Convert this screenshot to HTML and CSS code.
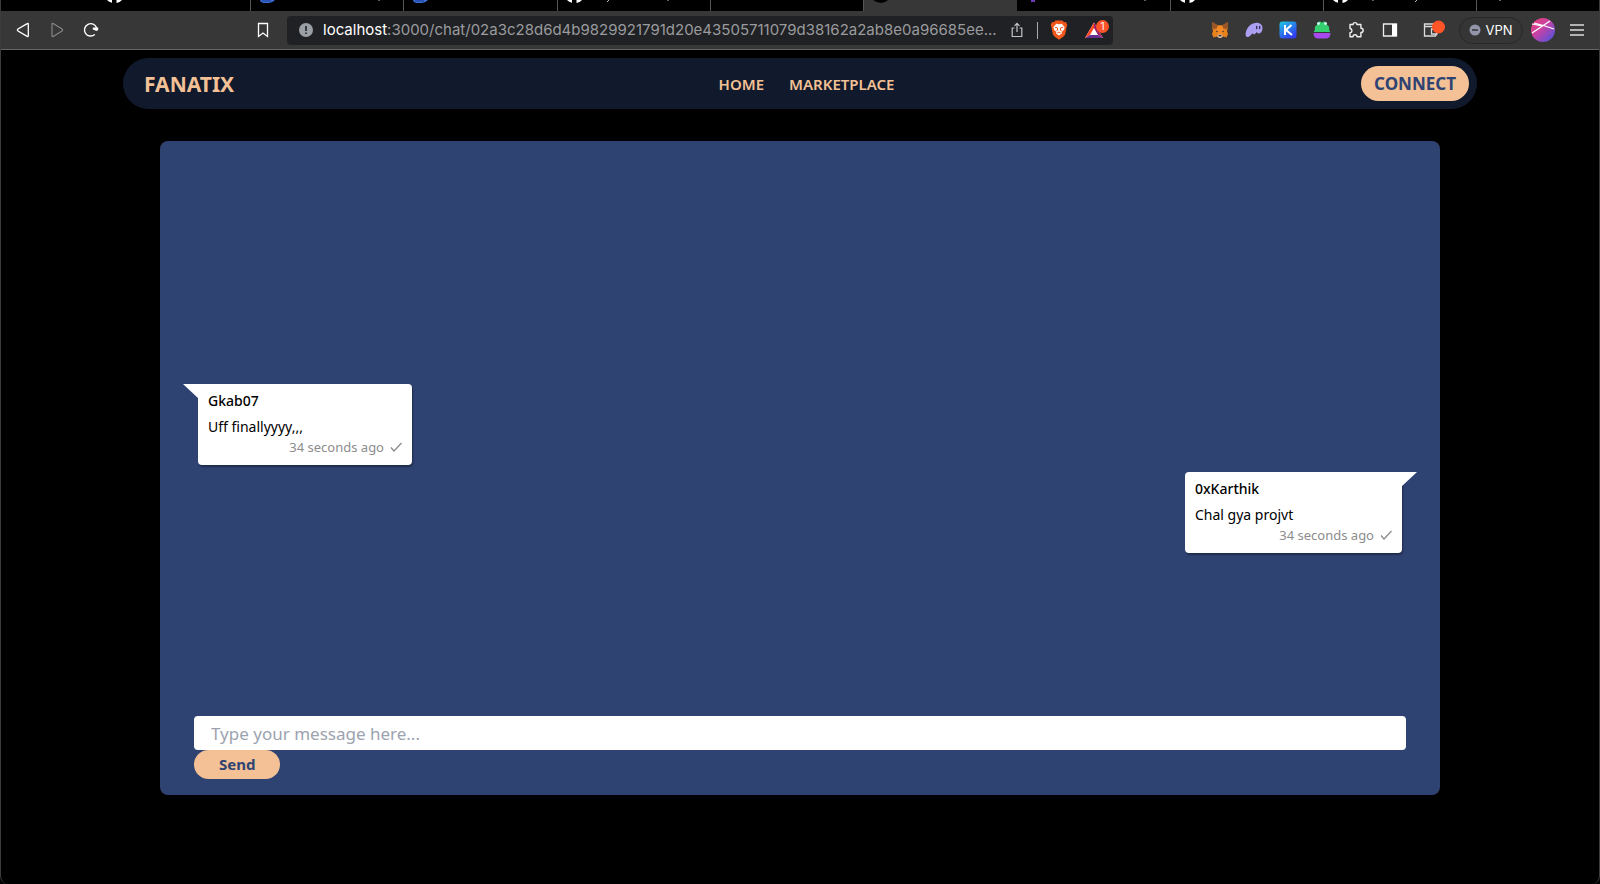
FILE: index.html
```html
<!DOCTYPE html>
<html lang="en">
<head>
<meta charset="utf-8">
<title>Fanatix chat</title>
<link rel="stylesheet" href="styles.css">
</head>
<body>
<div class="window">
  <div class="tabs">
    <div class="tab"><svg class="mark" viewBox="0 0 130 11"><path d="M0 0h5v2.800Q2 2 0 0zM9.500 0h5.500q-2 2.400-5.500 3z" fill="#fff"/></svg></div>
    <div class="tab"><svg class="mark" viewBox="0 0 130 11"><path d="M0 0h15q-3 3-6 3h-6q-3-1-3-3z" fill="#3e6fd8"/><path d="M2 1h9" stroke="#173a8a"/><path d="M119 0v1" stroke="#bbb"/></svg></div>
    <div class="tab"><svg class="mark" viewBox="0 0 130 11"><path d="M0 0h15q-3 3-6 3h-6q-3-1-3-3z" fill="#3e6fd8"/><path d="M2 1h9" stroke="#173a8a"/></svg></div>
    <div class="tab"><svg class="mark" viewBox="0 0 130 11"><path d="M0 0h5v2.800Q2 2 0 0zM9.500 0h5.500q-2 2.400-5.500 3z" fill="#fff"/><path d="M42 0l-2 2M101 0v1" stroke="#bbb"/></svg></div>
    <div class="tab"></div>
    <div class="tab active"><svg class="mark" viewBox="0 0 130 11"><path d="M0 0h15q-3 3-7 3t-8-3z" fill="#000"/></svg></div>
    <div class="tab"><svg class="mark" viewBox="0 0 130 11"><path d="M5 0h4v2h-4z" fill="#6a3bb5"/><path d="M119 0v1" stroke="#bbb"/></svg></div>
    <div class="tab"><svg class="mark" viewBox="0 0 130 11"><path d="M0 0h5v2.800Q2 2 0 0zM9.500 0h5.500q-2 2.400-5.500 3z" fill="#fff"/></svg></div>
    <div class="tab"><svg class="mark" viewBox="0 0 130 11"><path d="M0 0h5v2.800Q2 2 0 0zM9.500 0h5.500q-2 2.400-5.500 3z" fill="#fff"/><path d="M40 0v1M84 0l-2 2" stroke="#bbb"/></svg></div>
    <div class="tab last"><svg class="mark" viewBox="0 0 130 11"><path d="M14 0v1" stroke="#ccc"/></svg></div>
  </div>

  <div class="toolbar">
    <div class="controls">
      <button class="tool" aria-label="Back"><svg width="16" height="16" viewBox="0 0 16 16"><path d="M13.300 2.200v11.600q0 1.300-1.100.6L3 9q-1.200-1 0-2l9.200-5.400q1.100-.7 1.100.6z" fill="none" stroke="#fff" stroke-width="1.300"/></svg></button>
      <button class="tool" aria-label="Forward"><svg width="16" height="16" viewBox="0 0 16 16"><path d="M3 2.200v11.600q0 1.300 1.100.6L13 9q1.200-1 0-2L4.100 1.600Q3 .9 3 2.200z" fill="none" stroke="#858585" stroke-width="1.200"/></svg></button>
      <button class="tool" aria-label="Reload"><svg width="16" height="16" viewBox="0 0 16 16"><path d="M11.800 12.500A6.200 6.200 0 1 1 13.600 6" fill="none" stroke="#fff" stroke-width="1.400"/><path d="M9.800 5.600h5.400v2.300l-1.600 1.200-3.800-1.500z" fill="#fff"/></svg></button>
      <button class="tool bookmark" aria-label="Bookmark"><svg width="16" height="16" viewBox="0 0 16 16"><path d="M3.500 1.500h9v13L8 11l-4.500 3.500z" fill="none" stroke="#fff" stroke-width="1.300"/></svg></button>
    </div>

    <div class="address">
      <svg width="14" height="14" viewBox="0 0 14 14"><circle cx="7" cy="7" r="7" fill="#9aa0a6"/><path d="M7 3v5M7 9.500v1.500" stroke="#202124" stroke-width="1.600"/></svg>
      <div class="url"><span class="host">localhost</span>:3000/chat/02a3c28d6d4b9829921791d20e43505711079d38162a2ab8e0a96685ee...</div>
      <button class="tool" aria-label="Share"><svg width="16" height="16" viewBox="0 0 16 16"><path d="M5.500 6H3.200v8.500h9.600V6h-2.300M8 10V1.300M5.500 3.800L8 1.300l2.500 2.500" fill="none" stroke="#c4c4c4" stroke-width="1.200"/></svg></button>
      <span class="divider"></span>
      <button class="tool shield" aria-label="Brave Shields"><svg width="18" height="20" viewBox="0 0 18 20"><path d="M5.500.5h7l1.500 1.700 2-.2 1.300 3-.6 1.500-1.500 7.500q-.5 1.800-2 2.800L9 19.700l-4.200-2.900q-1.500-1-2-2.800L1.300 6.500.7 5 2 2l2 .2z" fill="#f1561b"/><path d="M6.300 3.800L9 4.200l2.700-.4 3 3.400-.8 2.600-2.200 2.300.2 1.400L9 15.500l-2.900-2 .2-1.400-2.200-2.300-.8-2.600z" fill="#fff"/><path d="M4.800 7.200l2.700.7M13.200 7.200l-2.700.7M7.500 8v2l-1 1.200M10.500 8v2l1 1.200M7.300 13L9 12l1.700 1" fill="none" stroke="#f1561b"/></svg></button>
      <button class="tool rewards" aria-label="Brave Rewards"><svg width="26" height="22" viewBox="0 0 26 22"><path d="M10 3.500L1 19h18z" fill="#fff"/><path d="M10 3.500L1 19l5-3 4-7z" fill="#ff4724"/><path d="M1 19h18l-5-3H6z" fill="#662d91"/><path d="M10 3.500L19 19l-5-3-4-7z" fill="#9e1f63"/><circle cx="18.500" cy="7.500" r="6.500" fill="#fb542b"/></svg><span class="badge">1</span></button>
    </div>

    <div class="extensions">
      <button class="tool" aria-label="MetaMask"><svg width="18" height="18" viewBox="0 0 18 18"><path d="M1 1l6 3.500h4L17 1v5l-1 4 1 3-1.500 3.500-3.500-1-2 1.500H8l-2-1.500-3.500 1L1 13l1-3-1-4z" fill="#e8821e"/><path d="M1 1l6 3.500-1.500 3L2 8 1 6zM17 1l-6 3.500 1.500 3L16 8l1-2z" fill="#9a5525"/><path d="M7 4.500h4l1.500 6-2 3h-3l-2-3z" fill="#f58a25"/><path d="M5 9.700l2.300.8-1.800.8zM13 9.700l-2.300.8 1.800.8z" fill="#233447"/><path d="M6 15l1.500-1.500h3L12 15l-2 2H8z" fill="#d7c1b3"/><path d="M7.600 14h2.800v1.400H7.600z" fill="#333"/></svg></button>
      <button class="tool" aria-label="Phantom"><svg width="18" height="18" viewBox="0 0 18 18"><path d="M.6 13.500C.5 9 4.500 2 11.500 1.800c4 0 6.200 2.500 6 5.700-.2 3-1.800 5-4 5-1.200 0-1-1.200-1.600-1.300-.9 0-1 1.600-2.400 2-1.300.3-1.200-1-2-.8C6.200 13 5 16 2.500 16 1.200 16 .6 15 .6 13.500z" fill="#ab9ff2"/><path d="M11.700 5.500v2M14.700 5.500v2" stroke="#3c315b" stroke-width="1.400" stroke-linecap="round"/></svg></button>
      <button class="tool" aria-label="Keplr"><svg width="18" height="18" viewBox="0 0 18 18"><defs><linearGradient id="keplr" x2=".6" y2="1"><stop stop-color="#1fc9e4"/><stop offset="1" stop-color="#323cf0"/></linearGradient></defs><rect x=".5" y=".5" width="17" height="17" rx="3" fill="url(#keplr)"/><path d="M6 4v10M12.500 4L7 9l6 5" fill="none" stroke="#fff" stroke-width="2"/></svg></button>
      <button class="tool" aria-label="Frog wallet"><svg width="18" height="18" viewBox="0 0 18 18"><path d="M2 9Q1 5 4 4q0-3.500 3-3.500Q8.500.5 9 2q.5-1.500 2-1.500 3 0 3 3.500 3 1 2 5 1 0 1 2H1q0-2 1-2z" fill="#35cf70"/><circle cx="5.500" cy="2.600" r="1.400" fill="#dff"/><circle cx="12.500" cy="2.600" r="1.400" fill="#dff"/><path d="M.5 12h17q0 5-4 5.500h-9q-4-.5-4-5.500z" fill="#a64af0"/></svg></button>
      <button class="tool" aria-label="Extensions"><svg width="18" height="18" viewBox="0 0 18 18"><path d="M3 3.500h3.200C6 1 10 1 9.900 3.500h4v3.800c3 0 3 4.200 0 4.200v4.200H10c0-2.700-4-2.700-4 0H3v-3.900c2.600-.3 2.600-4 0-4.300z" fill="none" stroke="#eee" stroke-width="1.400" stroke-linejoin="round"/></svg></button>
      <button class="tool" aria-label="Side panel"><svg width="18" height="18" viewBox="0 0 18 18"><path d="M2.500 3h13v12h-13z" fill="none" stroke="#eee" stroke-width="1.300"/><path d="M11 3h5v12h-5z" fill="#fff"/></svg></button>
      <button class="tool wallet" aria-label="Wallet"><svg width="24" height="20" viewBox="0 0 24 20"><path d="M14 16H2.500V4H13M2.500 6.500H13M14 16v-2M15 9H9.500v5H15z" fill="none" stroke="#ddd" stroke-width="1.300"/><circle cx="16.500" cy="7" r="6.500" fill="#ff5527"/></svg></button>
      <button class="vpn"><svg width="12" height="12" viewBox="0 0 12 12"><circle cx="6" cy="6" r="5.500" fill="#9295a8"/><path d="M3 6h6" stroke="#33333b" stroke-width="1.500"/></svg>VPN</button>
      <button class="tool avatar" aria-label="Profile"><svg width="24" height="24" viewBox="0 0 24 24"><defs><linearGradient id="profile" x2="1" y2="1"><stop stop-color="#ed3f72"/><stop offset=".45" stop-color="#c742a6"/><stop offset="1" stop-color="#3f55e5"/></linearGradient></defs><circle cx="12" cy="12" r="12" fill="url(#profile)"/><path d="M1 15L19 3M3 5q9 2 20 6M1 6l10 2" fill="none" stroke="#fff" stroke-width="1.200"/></svg></button>
      <button class="tool" aria-label="Menu"><svg width="16" height="16" viewBox="0 0 16 16"><path d="M1 3h14M1 8h14M1 13h14" stroke="#ddd" stroke-width="1.400"/></svg></button>
    </div>
  </div>

  <header class="navbar">
    <a class="brand" href="#">FANATIX</a>
    <nav class="links"><a href="#">HOME</a><a href="#">MARKETPLACE</a></nav>
    <button class="connect">CONNECT</button>
  </header>

  <main class="chat">
    <div class="messages">
      <article class="message received">
        <h2 class="author">Gkab07</h2>
        <p class="text">Uff finallyyyy,,,</p>
        <p class="time">34 seconds ago <svg width="12" height="10" viewBox="0 0 12 10"><path d="M1 5.500L4 9l7.500-8" fill="none" stroke="#888" stroke-width="1.200"/></svg></p>
      </article>
      <article class="message sent">
        <h2 class="author">0xKarthik</h2>
        <p class="text">Chal gya projvt</p>
        <p class="time">34 seconds ago <svg width="12" height="10" viewBox="0 0 12 10"><path d="M1 5.500L4 9l7.500-8" fill="none" stroke="#888" stroke-width="1.200"/></svg></p>
      </article>
    </div>
    <form class="composer">
      <input class="entry" type="text" aria-label="Message" placeholder="Type your message here...">
      <button class="send" type="button">Send</button>
    </form>
  </main>
</div>
</body>
</html>
```

FILE: styles.css
```css
* {
  box-sizing: border-box;
}

body {
  margin: 0;
  background: #000;
  font-family: "Noto Sans", sans-serif;
}

button {
  border: 0;
  padding: 0;
  font-family: inherit;
  cursor: pointer;
}

a {
  color: inherit;
  text-decoration: none;
}

.window {
  min-height: 100vh;
  border: solid #3c3c3c;
  border-width: 0 1px;
  border-radius: 0 0 8px 8px;
}

/* Browser chrome */
.tabs {
  display: flex;
  height: 11px;
  padding-left: 97px;
  overflow: hidden;
}

.tab {
  flex: 1 1 0;
  min-width: 0;
  padding-left: 9px;
  overflow: hidden;
  border-right: 1px solid #555;
}

.tab.active {
  background: #373737;
  border-color: #373737;
}

.tab.last {
  flex: 0 0 122px;
  border: 0;
}

.mark {
  display: block;
  width: 130px;
  height: 11px;
}

.toolbar {
  display: flex;
  align-items: center;
  height: 39px;
  background: #373737;
  border-bottom: 1px solid #666;
}

.tool {
  display: flex;
  flex: none;
  position: relative;
  background: none;
}

.controls {
  display: flex;
  flex: none;
  width: 286px;
  padding: 0 16px 0 14px;
  gap: 18px;
}

.bookmark {
  margin-left: auto;
}

.address {
  display: flex;
  flex: 1;
  align-items: center;
  min-width: 0;
  height: 29px;
  padding: 0 3px 0 12px;
  border-radius: 4px;
  background: #202124;
}

.url {
  flex: 1;
  min-width: 0;
  margin-left: 10px;
  overflow: hidden;
  color: #9a9b9e;
  font: 15px/20px Inter, sans-serif;
  white-space: nowrap;
}

.host {
  color: #fff;
}

.divider {
  width: 1px;
  height: 17px;
  margin: 0 12px;
  background: #aaa;
}

.rewards {
  margin-left: 16px;
}

.badge {
  position: absolute;
  top: 2px;
  right: 1px;
  width: 13px;
  color: #fff;
  font: 10px/11px Inter, sans-serif;
  text-align: center;
}

.extensions {
  display: flex;
  flex: none;
  align-items: center;
  gap: 16px;
  padding: 0 14px 0 98px;
}

.wallet {
  margin-left: 7px;
}

.vpn {
  display: flex;
  align-items: center;
  justify-content: center;
  gap: 4px;
  width: 64px;
  height: 27px;
  margin-left: -3px;
  border: 1px solid #282828;
  border-radius: 14px;
  background: #353535;
  color: #fff;
  font: 13px/20px Inter, sans-serif;
}

.avatar {
  margin: 0 -2px 0 -8px;
}

/* Site header */
.navbar {
  display: grid;
  grid-template-columns: 1fr auto 1fr;
  align-items: center;
  margin: 8px 122px 32px;
  padding: 8px 8px 8px 21px;
  border-radius: 26px;
  background: #111a2c;
  color: #f3c195;
}

.brand {
  font-size: 21px;
  font-weight: 700;
  line-height: 34px;
}

.links {
  display: flex;
  gap: 25px;
  font-size: 15px;
  font-weight: 600;
}

.connect {
  justify-self: end;
  padding: 0 13px;
  border-radius: 18px;
  background: #f3c195;
  color: #2f4373;
  font-size: 17px;
  font-weight: 700;
  line-height: 35px;
}

/* Chat panel */
.chat {
  display: flex;
  flex-direction: column;
  width: 80vw;
  height: 74vh;
  margin: 0 auto;
  padding: 16px 34px;
  border-radius: 8px;
  background: #2f4373;
}

.messages {
  display: flex;
  flex: 1;
  flex-direction: column;
  justify-content: center;
  gap: 7px;
  padding: 64px 4px 0;
}

.message {
  position: relative;
  padding: 6px 10px 9px;
  border-radius: 4px;
  background: #fff;
  color: #000;
  box-shadow: 1px 2px 2px rgba(0, 0, 0, 0.35);
}

.message::before {
  content: "";
  position: absolute;
  top: 0;
  width: 16px;
  height: 15px;
  background: #fff;
}

.received {
  align-self: flex-start;
  min-width: 214px;
  border-top-left-radius: 0;
}

.received::before {
  right: calc(100% - 1px);
  clip-path: polygon(0 0, 100% 0, 100% 100%);
}

.sent {
  align-self: flex-end;
  min-width: 217px;
  border-top-right-radius: 0;
}

.sent::before {
  left: calc(100% - 1px);
  clip-path: polygon(0 0, 100% 0, 0 100%);
}

.author,
.text,
.time {
  margin: 0;
}

.author {
  font-size: 14px;
  font-weight: 500;
  line-height: 22px;
}

.text {
  margin-top: 4px;
  font-size: 14px;
  line-height: 22px;
}

.time {
  display: flex;
  align-items: center;
  justify-content: flex-end;
  gap: 6px;
  color: #8c8c8c;
  font-size: 13px;
  line-height: 18px;
}

.composer {
  display: flex;
  flex-direction: column;
  align-items: flex-start;
}

.entry {
  width: 100%;
  height: 34px;
  padding: 0 17px;
  border: 0;
  border-radius: 4px;
  background: #fff;
  font-family: inherit;
  font-size: 17px;
}

.entry::placeholder {
  color: #9ca3af;
}

.send {
  padding: 0 25px;
  border-radius: 15px;
  background: #f3c195;
  color: #2f4373;
  font-size: 15px;
  font-weight: 700;
  line-height: 29px;
}
```
